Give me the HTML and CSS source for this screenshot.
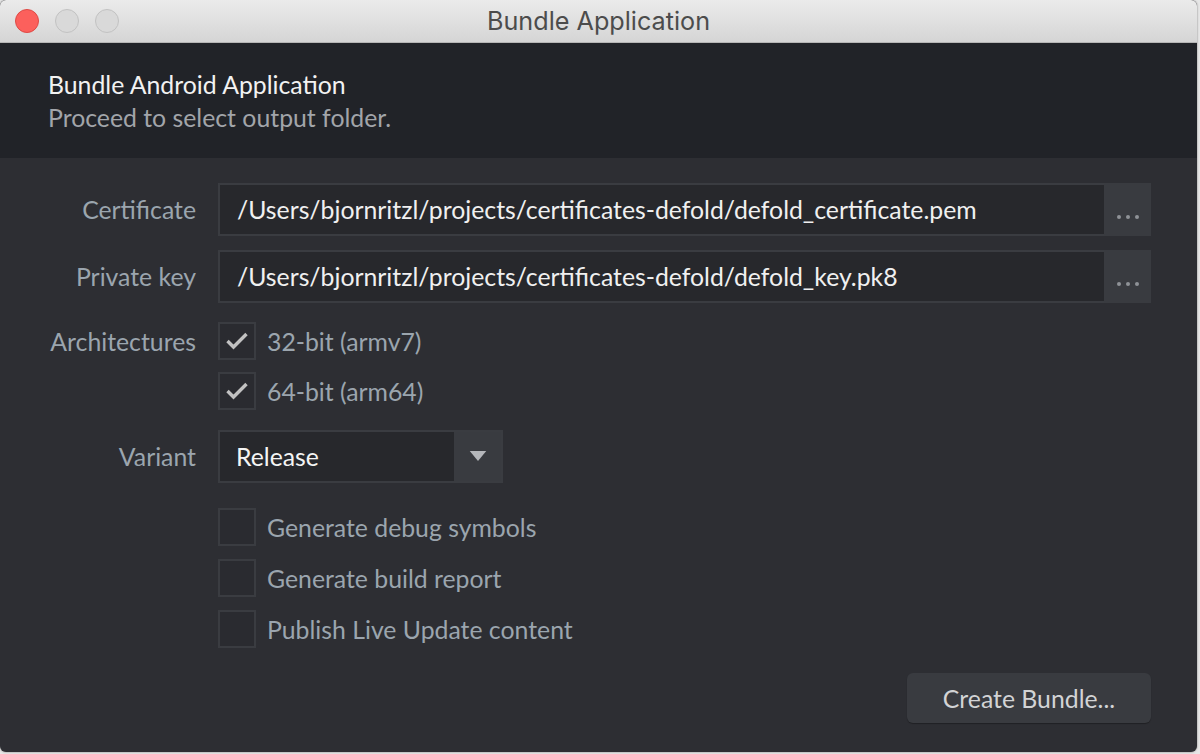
FILE: index.html
```html
<!DOCTYPE html>
<html>
<head>
<meta charset="utf-8">
<link rel="stylesheet" href="styles.css">
</head>
<body>
<div class="window">
  <div class="titlebar">
    <div class="lights">
      <span class="light red"></span>
      <span class="light"></span>
      <span class="light"></span>
    </div>
    <div class="wtitle">Bundle Application</div>
  </div>
  <div class="header">
    <div class="h-title">Bundle Android Application</div>
    <div class="h-sub">Proceed to select output folder.</div>
  </div>
  <div class="content">
    <div class="form">
      <div class="label">Certificate</div>
      <div class="field">
        <div class="input">/Users/bjornritzl/projects/certificates-defold/defold_certificate.pem</div>
        <div class="browse"><span></span><span></span><span></span></div>
      </div>

      <div class="label r2">Private key</div>
      <div class="field r2">
        <div class="input">/Users/bjornritzl/projects/certificates-defold/defold_key.pk8</div>
        <div class="browse"><span></span><span></span><span></span></div>
      </div>

      <div class="label r3">Architectures</div>
      <div class="checks r3">
        <div class="check"><span class="box"><svg viewBox="0 0 38 38" width="38" height="38"><path d="M9.5 19 L15.5 25 L28.5 12" fill="none" stroke="#c2c2c2" stroke-width="3.4"/></svg></span><span class="ctext">32-bit (armv7)</span></div>
        <div class="check c2"><span class="box"><svg viewBox="0 0 38 38" width="38" height="38"><path d="M9.5 19 L15.5 25 L28.5 12" fill="none" stroke="#c2c2c2" stroke-width="3.4"/></svg></span><span class="ctext">64-bit (arm64)</span></div>
      </div>

      <div class="label r4">Variant</div>
      <div class="r4">
        <div class="select">
          <div class="sval">Release</div>
          <div class="sarrow"><svg viewBox="0 0 18 12" width="18" height="11"><path d="M0 0 H18 L9 11 Z" fill="#b5b7bb"/></svg></div>
        </div>
      </div>

      <div class="label r5"></div>
      <div class="checks r5">
        <div class="check"><span class="box"></span><span class="ctext">Generate debug symbols</span></div>
        <div class="check c3"><span class="box"></span><span class="ctext">Generate build report</span></div>
        <div class="check c3"><span class="box"></span><span class="ctext">Publish Live Update content</span></div>
      </div>
    </div>
    <div class="actions">
      <button class="btn">Create Bundle...</button>
    </div>
  </div>
</div>
</body>
</html>
```

FILE: styles.css
```css
* { box-sizing: border-box; }
html, body { margin: 0; padding: 0; }
body {
  background: #e6e6e6;
  width: 1200px;
  height: 754px;
  overflow: hidden;
  font-family: Lato, "Noto Sans", sans-serif;
}
.window {
  width: 1197px;
  height: 752px;
  border-radius: 6px;
  overflow: hidden;
  background: #2d2e33;
  display: flex;
  flex-direction: column;
  box-shadow: 0 0 2px rgba(0,0,0,0.5);
}
.titlebar {
  height: 43px;
  flex: none;
  background: linear-gradient(#ebebeb, #d5d5d5);
  border-bottom: 1px solid #b6b6b6;
  display: flex;
  align-items: center;
  position: relative;
}
.lights {
  display: flex;
  gap: 16px;
  padding-left: 15px;
}
.light {
  width: 24px;
  height: 24px;
  border-radius: 50%;
  background: #d9d9d9;
  border: 1px solid #c2c2c2;
}
.light.red {
  background: #fc605c;
  border-color: #de4a45;
}
.wtitle {
  position: absolute;
  left: 0;
  right: 0;
  top: 0;
  text-align: center;
  font-family: Inter, "Liberation Sans", sans-serif;
  font-size: 25.2px;
  line-height: 42px;
  color: #4c4c4c;
}
.header {
  height: 115px;
  flex: none;
  background: #212328;
  padding: 25px 0 0 48px;
}
.h-title {
  color: #f2f2f2;
  font-size: 24.8px;
  line-height: 33px;
}
.h-sub {
  color: #a2a5aa;
  font-size: 24.8px;
  line-height: 33px;
}
.content {
  flex: 1;
  padding: 25px 46px 0 46px;
  display: flex;
  flex-direction: column;
}
.form {
  display: grid;
  grid-template-columns: 150px 1fr;
  column-gap: 22px;
}
.label {
  text-align: right;
  color: #9ba5ae;
  font-size: 24.8px;
  line-height: 53px;
  height: 53px;
  white-space: nowrap;
}
.r2 { margin-top: 14px; }
.r3 { margin-top: 19px; }
.r4 { margin-top: 20px; }
.r5 { margin-top: 25px; }
.r3.label { line-height: 40px; height: 40px; }
.field {
  display: flex;
  height: 53px;
}
.input {
  flex: 1;
  background: #27282c;
  border: 2px solid #3a3c41;
  border-right: none;
  color: #f0f0f0;
  font-size: 24.8px;
  line-height: 49px;
  padding-left: 17px;
  white-space: nowrap;
  overflow: hidden;
}
.browse {
  width: 47px;
  background: #393b40;
  display: flex;
  align-items: center;
  justify-content: center;
  gap: 5px;
  padding-top: 14px;
}
.browse span {
  width: 4px;
  height: 4px;
  border-radius: 50%;
  background: #8f9297;
}
.checks {
  display: flex;
  flex-direction: column;
}
.check {
  display: flex;
  align-items: center;
  gap: 11px;
  height: 38px;
}
.check.c2 { margin-top: 12px; }
.check.c3 { margin-top: 13px; }
.box {
  width: 38px;
  height: 38px;
  flex: none;
  border: 2px solid #3a3c41;
  background: #2a2b30;
  display: flex;
  align-items: center;
  justify-content: center;
  overflow: hidden;
}
.box svg { flex: none; }
.ctext {
  color: #9ba5ae;
  font-size: 24.8px;
  white-space: nowrap;
}
.select {
  width: 285px;
  height: 53px;
  display: flex;
  border: 2px solid #3a3c41;
  background: #27282c;
}
.sval {
  flex: 1;
  color: #f4f4f4;
  font-size: 24.8px;
  line-height: 49px;
  padding-left: 16px;
}
.sarrow {
  width: 47px;
  background: #393b40;
  display: flex;
  align-items: center;
  justify-content: center;
}
.actions {
  display: flex;
  justify-content: flex-end;
  margin-top: 25px;
}
.btn {
  width: 244px;
  height: 50px;
  border: none;
  border-radius: 6px;
  background: #393b40;
  color: #d2d3d5;
  font-family: Lato, "Noto Sans", sans-serif;
  font-size: 24.8px;
  box-shadow: 0 1px 1px rgba(0,0,0,0.3);
  padding: 0;
}
```
